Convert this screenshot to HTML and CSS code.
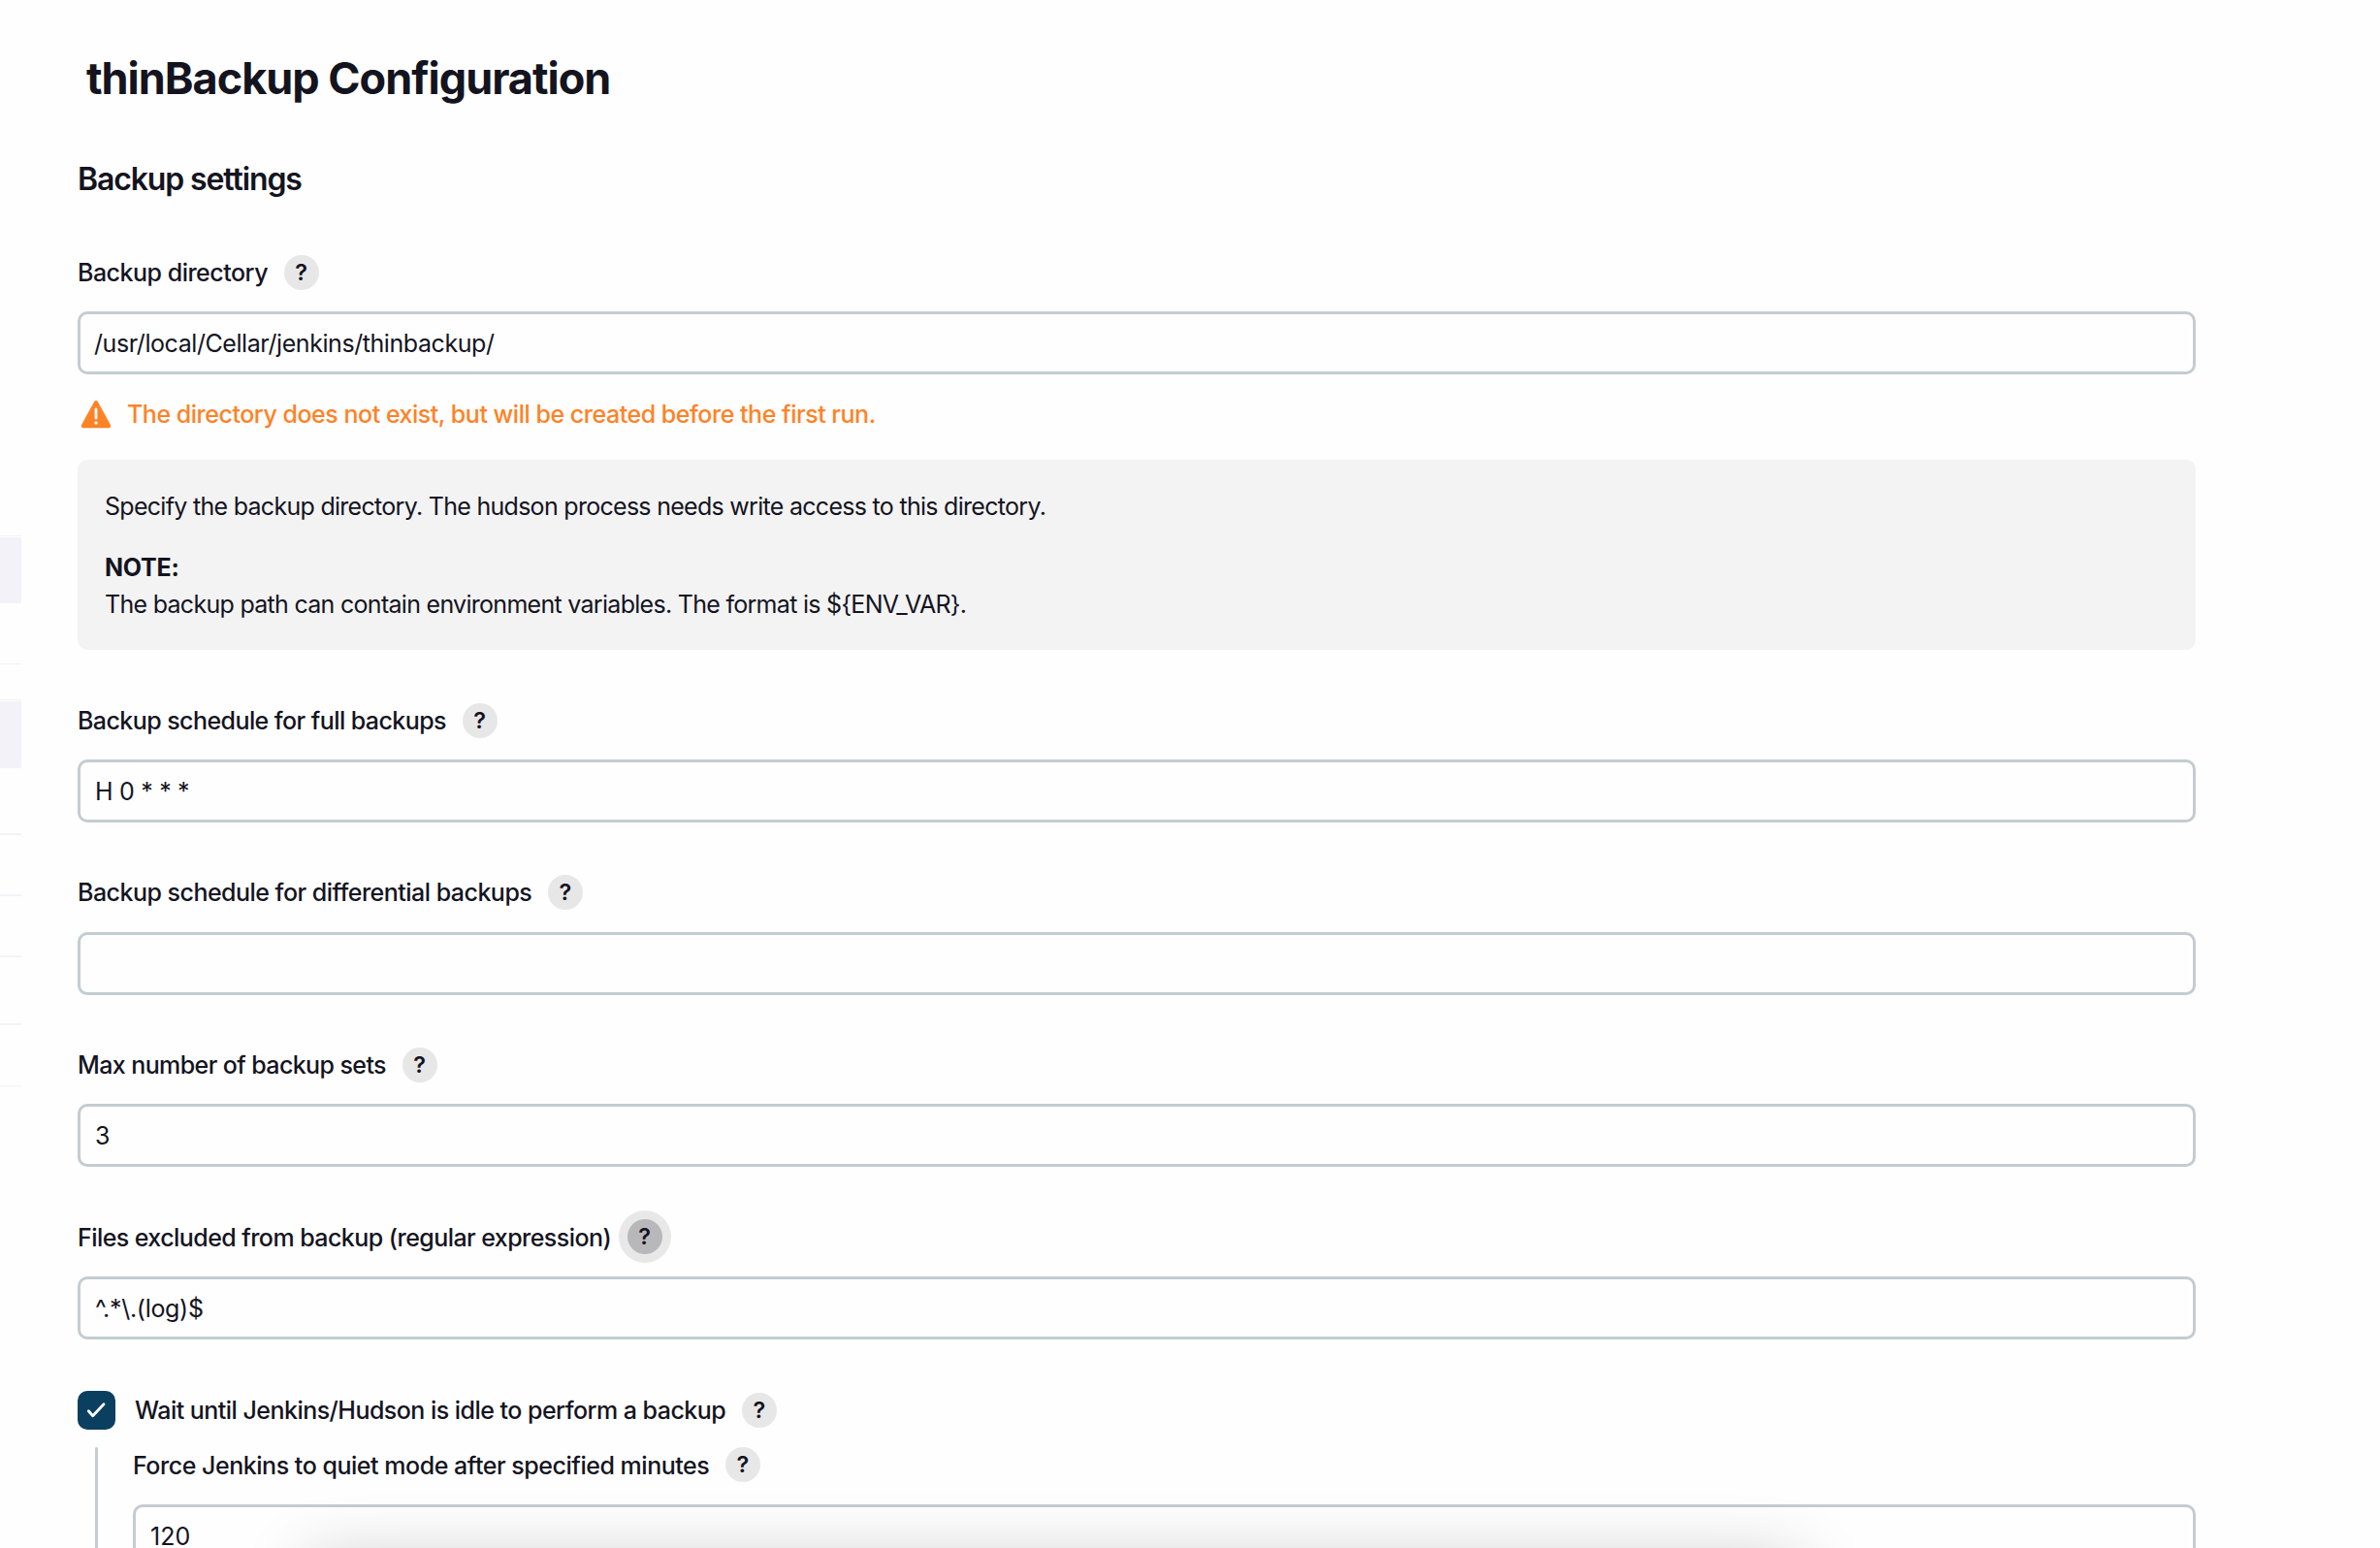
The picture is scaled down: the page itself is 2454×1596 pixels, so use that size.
FILE: index.html
```
<!DOCTYPE html>
<html lang="en">
<head>
<meta charset="utf-8">
<title>thinBackup Configuration</title>
<link rel="stylesheet" href="styles.css">
</head>
<body>
<div class="page">
  <aside class="side-panel">
    <div class="side-row side-row--active side-row--first"></div>
    <div class="side-row side-row--after"></div>
    <div class="side-row side-row--gap"></div>
    <div class="side-row side-row--active side-row--second"></div>
    <div class="side-row side-row--tall"></div>
    <div class="side-row side-row--thick"></div>
    <div class="side-row side-row--thick"></div>
    <div class="side-row side-row--thick side-row--wide"></div>
    <div class="side-row side-row--thick side-row--last"></div>
    <div class="side-row"></div>
  </aside>

  <main class="config">
    <h1 class="config-title">thinBackup Configuration</h1>
    <h2 class="section-title">Backup settings</h2>

    <div class="field">
      <div class="field-head">
        <label class="label label--dir" for="dir">Backup directory</label>
        <button class="help" type="button">?</button>
      </div>
      <input class="input input--path" id="dir" type="text" value="/usr/local/Cellar/jenkins/thinbackup/">
      <div class="warning">
        <svg class="warning-icon" viewBox="0 0 32 30" width="32" height="30">
          <path d="M16 3.2 L29 27 H3 Z" fill="#fe8226" stroke="#fe8226" stroke-width="4.4" stroke-linejoin="round"/>
          <path d="M16 10 V19" stroke="#fff" stroke-width="2.8" stroke-linecap="round"/>
          <circle cx="16" cy="24" r="1.7" fill="#fff"/>
        </svg>
        <span class="warning-text">The directory does not exist, but will be created before the first run.</span>
      </div>
      <div class="help-box">
        <p class="help-line">Specify the backup directory. The hudson process needs write access to this directory.</p>
        <p class="help-line"><b class="note">NOTE:</b><br>The backup path can contain environment variables. The format is ${ENV_VAR}.</p>
      </div>
    </div>

    <div class="field">
      <div class="field-head">
        <label class="label label--full" for="full">Backup schedule for full backups</label>
        <button class="help" type="button">?</button>
      </div>
      <input class="input" id="full" type="text" value="H 0 * * *">
    </div>

    <div class="field">
      <div class="field-head">
        <label class="label label--diff" for="diff">Backup schedule for differential backups</label>
        <button class="help" type="button">?</button>
      </div>
      <input class="input" id="diff" type="text" value="">
    </div>

    <div class="field">
      <div class="field-head">
        <label class="label label--max" for="max">Max number of backup sets</label>
        <button class="help" type="button">?</button>
      </div>
      <input class="input" id="max" type="text" value="3">
    </div>

    <div class="field">
      <div class="field-head">
        <label class="label label--files" for="files">Files excluded from backup (regular expression)</label>
        <button class="help help--focus" type="button">?</button>
      </div>
      <input class="input" id="files" type="text" value="^.*\.(log)$">
    </div>

    <div class="check-row">
      <span class="checkbox">
        <svg viewBox="0 0 39 40" width="39" height="40">
          <path d="M11.3 20.8 L15.7 25.7 L27 13.7" fill="none" stroke="#fff" stroke-width="2.8" stroke-linecap="round" stroke-linejoin="round"/>
        </svg>
      </span>
      <span class="label label--wait">Wait until Jenkins/Hudson is idle to perform a backup</span>
      <button class="help" type="button">?</button>
    </div>

    <div class="nested">
      <span class="nested-line"></span>
      <div class="nested-field">
        <div class="field-head">
          <label class="label label--force" for="force">Force Jenkins to quiet mode after specified minutes</label>
          <button class="help" type="button">?</button>
        </div>
        <input class="input input--force" id="force" type="text" value="120">
      </div>
    </div>
  </main>
  <div class="bottom-bar"></div>
</div>
</body>
</html>
```
FILE: styles.css
```
* {
  box-sizing: border-box;
}

html,
body {
  margin: 0;
  height: 1596px;
  overflow: hidden;
}

body {
  background: #fefefe;
  color: #14141f;
  font-family: Inter, "Liberation Sans", sans-serif;
  font-size: 25px;
}

.page {
  position: relative;
  display: flex;
  height: 1596px;
  overflow: hidden;
}

.side-panel {
  flex: none;
  width: 22px;
  padding-top: 552px;
}

.side-row {
  height: 37px;
  border-top: 1px solid #f3f2f7;
}

.side-row--active {
  padding-top: 1px;
  background: #f3f2f8 content-box;
}

.side-row--first {
  height: 70px;
}

.side-row--after {
  height: 62px;
  border-top: 0;
}

.side-row--second {
  height: 71px;
}

.side-row--tall {
  height: 67px;
  border-top: 0;
}

.side-row--thick {
  height: 63px;
  border-top: 2px solid #f3f2f8;
}

.side-row--wide {
  height: 70px;
}

.side-row--last {
  height: 64px;
}

.config {
  flex: none;
  width: 2184px;
  margin-left: 58px;
  padding-top: 54px;
}

.config-title {
  margin: 0 0 58px;
  padding-left: 9px;
  font-size: 45px;
  font-weight: 700;
  line-height: 54px;
  letter-spacing: -1px;
}

.section-title {
  margin: 0 0 58.6px;
  font-size: 32px;
  font-weight: 600;
  line-height: 38px;
  letter-spacing: -1.12px;
}

.field {
  margin-bottom: 53.8px;
}

.field-head {
  display: flex;
  align-items: center;
  height: 36px;
  margin-bottom: 22.6px;
}

.label {
  font-weight: 500;
  line-height: 36px;
  white-space: nowrap;
}

.label--dir { letter-spacing: -0.5px; }
.label--full { letter-spacing: -0.57px; }
.label--diff { letter-spacing: -0.52px; }
.label--max { letter-spacing: -0.6px; }
.label--files {
  padding-top: 2px;
  letter-spacing: -0.56px;
}
.label--wait { letter-spacing: -0.53px; }
.label--force {
  padding-top: 2px;
  letter-spacing: -0.47px;
}

.help {
  flex: none;
  width: 36px;
  height: 36px;
  margin-left: 16.6px;
  padding: 0;
  border: 0;
  border-radius: 50%;
  background: #e7e7e8;
  color: inherit;
  font: 600 23.5px/36px Inter, "Liberation Sans", sans-serif;
  text-align: center;
}

.help--focus {
  background: #b8b8bb;
  box-shadow: 0 0 0 9px #e8e8e8;
}

.input {
  display: block;
  width: 100%;
  height: 65px;
  padding: 1px 14px 0 15px;
  border: 3px solid #c3ccd1;
  border-radius: 10px;
  background: #fefefe;
  color: inherit;
  font: 400 25px/38px Inter, "Liberation Sans", sans-serif;
  letter-spacing: -0.3px;
}

.input--path {
  padding: 0 14px;
  letter-spacing: -0.43px;
}

.input--force {
  letter-spacing: 0;
}

.warning {
  display: flex;
  align-items: center;
  height: 30px;
  margin: 25.8px 0 32px;
  padding-left: 3px;
  color: #fe8226;
}

.warning-icon {
  flex: none;
  margin-right: 16px;
}

.warning-text {
  font-weight: 500;
  line-height: 30px;
  letter-spacing: -0.48px;
}

.help-box {
  height: 196px;
  margin-bottom: 54.8px;
  padding: 29.5px 28px;
  border-radius: 10px;
  background: #f3f3f3;
  line-height: 38px;
  letter-spacing: -0.71px;
}

.help-line {
  margin: 0 0 25px;
}

.note {
  letter-spacing: -0.2px;
}

.check-row {
  display: flex;
  align-items: center;
  height: 40px;
  margin-bottom: 18px;
}

.checkbox {
  flex: none;
  width: 39px;
  height: 40px;
  margin-right: 20px;
  border-radius: 10px;
  background: #0b3f60;
}

.nested {
  display: flex;
  padding-left: 18px;
}

.nested-line {
  flex: none;
  width: 3px;
  height: 140px;
  margin-right: 36px;
  border-radius: 2px;
  background: #c3ccd1;
}

.nested-field {
  flex: 1;
}

/* Floating button bar whose shadow spills over the end of the form */
.bottom-bar {
  position: absolute;
  top: 1613px;
  left: 320px;
  width: 1535px;
  height: 120px;
  box-shadow: 0 0 72px rgba(0, 0, 0, 0.24);
}
```
